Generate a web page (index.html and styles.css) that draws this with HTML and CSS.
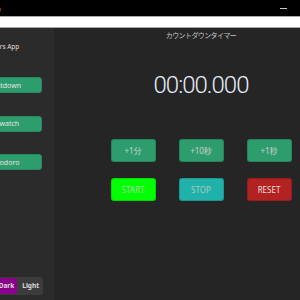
FILE: index.html
```html
<!DOCTYPE html>
<html lang="ja">
<head>
  <meta charset="UTF-8">
  <meta name="viewport" content="width=device-width, initial-scale=1.0">
  <title>Timers App</title>
  <link rel="stylesheet" href="styles.css">
</head>
<body>
  <div class="window">
    <div class="titlebar">
      <span class="window-title">Timers App</span>
      <div class="window-controls">
        <span class="ctrl"><i class="min"></i></span>
        <span class="ctrl"><i class="max"></i></span>
        <span class="ctrl"><i class="close"></i></span>
      </div>
    </div>
    <div class="menubar"></div>

    <div class="app">
      <aside class="sidebar">
        <h1>Timers App</h1>
        <nav class="nav">
          <button class="nav-btn">Countdown</button>
          <button class="nav-btn">Stopwatch</button>
          <button class="nav-btn">Pomodoro</button>
        </nav>
        <div class="theme-toggle">
          <span class="theme-opt active">Dark</span>
          <span class="theme-opt">Light</span>
        </div>
      </aside>

      <main class="main">
        <h2 class="timer-title">カウントダウンタイマー</h2>
        <div class="timer-display">00:00.000</div>
        <div class="controls">
          <button class="btn btn-add">+1分</button>
          <button class="btn btn-add">+10秒</button>
          <button class="btn btn-add">+1秒</button>
          <button class="btn btn-start">START</button>
          <button class="btn btn-stop">STOP</button>
          <button class="btn btn-reset">RESET</button>
        </div>
      </main>
    </div>
  </div>
</body>
</html>
```

FILE: styles.css
```css
/* General styles */
* {
  margin: 0;
  padding: 0;
  box-sizing: border-box;
  font-family: "Noto Sans", "Noto Sans CJK JP", sans-serif;
}

body {
  background-color: #252525;
  overflow: hidden;
  width: 300px;
  height: 300px;
}

/* Window frame (cropped on both sides) */
.window {
  width: 398px;
  margin-left: -50px;
}

.titlebar {
  height: 16px;
  background-color: #000;
  display: flex;
  align-items: center;
  justify-content: space-between;
}

.window-title {
  color: #e0e0e0;
  font-size: 8px;
  padding-left: 8px;
}

.window-controls {
  display: flex;
}

.ctrl {
  width: 26px;
  height: 16px;
  display: flex;
  align-items: center;
  justify-content: center;
}

.min {
  width: 7px;
  height: 1px;
  background-color: #ccc;
}

.max,
.close {
  width: 7px;
  height: 7px;
  border: 1px solid #bbb;
}

.menubar {
  height: 12px;
  background-color: #fff;
  border-top: 1px solid #a8a8a8;
  border-bottom: 1px solid #a8a8a8;
}

/* App layout */
.app {
  display: flex;
  height: 272px;
}

.sidebar {
  width: 104px;
  background-color: #2b2b2b;
  display: flex;
  flex-direction: column;
  padding: 13px 12px 5px;
}

.sidebar h1 {
  color: #e6ddd6;
  font-size: 6.5px;
  font-weight: normal;
  line-height: 12px;
  text-align: center;
}

.nav {
  display: flex;
  flex-direction: column;
  gap: 22.5px;
  margin-top: 24px;
}

.nav-btn {
  height: 16px;
  background-color: #2e9d6e;
  border: 1px solid #288a60;
  border-radius: 3px;
  color: #e4e4e4;
  font-size: 7px;
}

.theme-toggle {
  margin-top: auto;
  align-self: flex-end;
  margin-right: -1px;
  display: flex;
  gap: 3px;
  padding: 1px 2px 1px 1px;
  background-color: #3c3c3c;
  border-radius: 3px;
  height: 18px;
}

.theme-opt {
  color: #ddd;
  font-size: 6.5px;
  font-weight: bold;
  line-height: 16px;
  padding: 0 2px;
}

.theme-opt.active {
  background-color: #8b008b;
  border-radius: 2px;
  padding-right: 3px;
}

/* Main timer panel */
.main {
  flex: 1;
  display: flex;
  flex-direction: column;
  align-items: center;
  padding-top: 3px;
}

.timer-title {
  color: #c4c4c4;
  font-size: 7px;
  font-weight: normal;
  letter-spacing: -0.6px;
  line-height: 9px;
}

.timer-display {
  color: #e4edf8;
  font-family: Roboto, sans-serif;
  font-weight: 300;
  font-size: 24px;
  letter-spacing: -1px;
  line-height: 30px;
  margin-top: 30px;
}

.controls {
  display: grid;
  grid-template-columns: repeat(3, 45px);
  column-gap: 23px;
  row-gap: 16px;
  margin-top: 39px;
}

.btn {
  height: 23px;
  border-radius: 3px;
  font-size: 8px;
  color: #cfcfcf;
  border: 1px solid rgba(0, 0, 0, 0.15);
}

.btn-add {
  background-color: #2e9d6e;
}

.btn-start {
  background-color: #00ff00;
  color: #a8d8a8;
}

.btn-stop {
  background-color: #20b2aa;
  color: #a9c9c9;
}

.btn-reset {
  background-color: #b22222;
  color: #f0dede;
}
```
